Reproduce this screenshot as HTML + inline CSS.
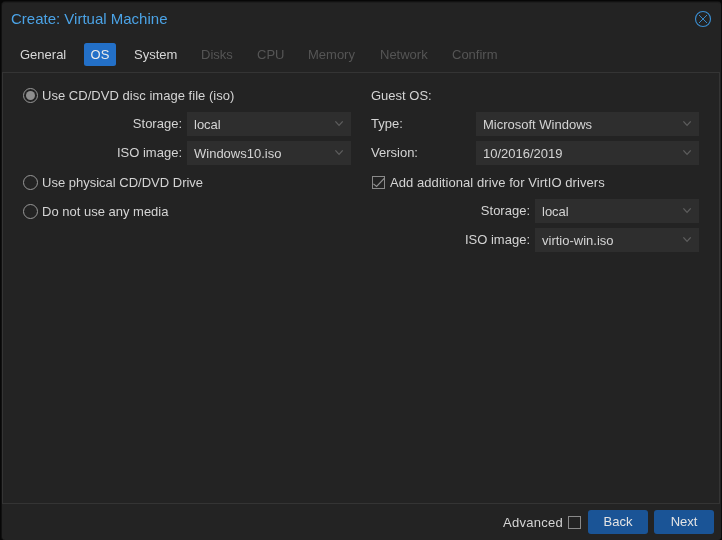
<!DOCTYPE html>
<html>
<head>
<meta charset="utf-8">
<title>Create: Virtual Machine</title>
<style>
html,body{margin:0;padding:0;}
body{width:722px;height:540px;overflow:hidden;background:#070707;font-family:"Liberation Sans",Arial,Helvetica,sans-serif;font-size:13px;color:#d4d4d4;position:relative;}
.win{will-change:transform;position:absolute;left:2px;top:2px;width:719px;height:538px;background:#232323;border-radius:3px;box-shadow:-1px 0 0 #111, 0 -1px 0 #121212, 1px 0 0 #0c0c0c, inset 0 1px 0 #1d1d1d;}
.title{position:absolute;left:9px;top:7px;font-size:15px;line-height:20px;color:#4ba3e6;white-space:nowrap;}
.close{position:absolute;left:692px;top:8px;width:18px;height:18px;}
.tabs{position:absolute;left:0;top:41px;height:24px;}
.tab{position:absolute;top:0;height:23px;line-height:23px;font-size:13px;color:#d8d8d8;white-space:nowrap;}
.tab.dis{color:#555;}
.tab.act{background:#2370c8;border-radius:2.5px;color:#ececec;text-align:center;}
.panel{position:absolute;left:0px;top:70px;width:716px;height:430px;border:1px solid #343434;background:#232323;}
.lbl{position:absolute;height:24px;line-height:24px;white-space:nowrap;color:#d4d4d4;font-size:13px;}
.lbl.r{text-align:right;}
.fld{position:absolute;height:24px;background:#2e2e2e;line-height:24px;font-size:13px;color:#d4d4d4;white-space:nowrap;}
.fld span{position:absolute;left:7px;top:1px;}
.fld svg{position:absolute;right:6px;top:7px;}
.radio{position:absolute;width:13px;height:13px;border:1px solid #979797;border-radius:50%;}
.radio.on::after{content:"";position:absolute;left:2px;top:2px;width:9px;height:9px;border-radius:50%;background:#8e8e8e;}
.chk{position:absolute;width:11px;height:11px;border:1px solid #8a8a8a;}
.btn{position:absolute;top:508px;height:24px;line-height:24px;background:#1a5496;border-radius:3px;color:#e4e4e4;text-align:center;font-size:13px;}
</style>
</head>
<body>
<div class="win">
  <div class="title">Create: Virtual Machine</div>
  <svg class="close" viewBox="0 0 18 18"><circle cx="9" cy="9" r="7.5" fill="none" stroke="#3a8dd0" stroke-width="1.15"/><path d="M5 5 L13 13 M13 5 L5 13" stroke="#3a8dd0" stroke-width="0.95" fill="none"/></svg>

  <div class="tabs">
    <div class="tab" style="left:18px;">General</div>
    <div class="tab act" style="left:82px;width:32px;">OS</div>
    <div class="tab" style="left:132px;">System</div>
    <div class="tab dis" style="left:199px;">Disks</div>
    <div class="tab dis" style="left:255px;">CPU</div>
    <div class="tab dis" style="left:306px;">Memory</div>
    <div class="tab dis" style="left:378px;">Network</div>
    <div class="tab dis" style="left:450px;">Confirm</div>
  </div>

  <div class="panel">
    <!-- left column -->
    <div class="radio on" style="left:20px;top:15px;"></div>
    <div class="lbl" style="left:39px;top:11px;letter-spacing:0.03px;">Use CD/DVD disc image file (iso)</div>

    <div class="lbl r" style="left:60px;width:119px;top:39px;">Storage:</div>
    <div class="fld" style="left:184px;top:39px;width:164px;"><span>local</span><svg width="12" height="10" viewBox="0 0 12 10"><path d="M2.4 2.4 L6.05 6.4 L9.7 2.4" fill="none" stroke="#5e5e5e" stroke-width="1.3"/></svg></div>

    <div class="lbl r" style="left:60px;width:119px;top:68px;">ISO image:</div>
    <div class="fld" style="left:184px;top:68px;width:164px;"><span>Windows10.iso</span><svg width="12" height="10" viewBox="0 0 12 10"><path d="M2.4 2.4 L6.05 6.4 L9.7 2.4" fill="none" stroke="#5e5e5e" stroke-width="1.3"/></svg></div>

    <div class="radio" style="left:20px;top:102px;"></div>
    <div class="lbl" style="left:39px;top:98px;">Use physical CD/DVD Drive</div>

    <div class="radio" style="left:20px;top:131px;"></div>
    <div class="lbl" style="left:39px;top:127px;">Do not use any media</div>

    <!-- right column -->
    <div class="lbl" style="left:368px;top:11px;">Guest OS:</div>

    <div class="lbl" style="left:368px;top:39px;">Type:</div>
    <div class="fld" style="left:473px;top:39px;width:223px;"><span>Microsoft Windows</span><svg width="12" height="10" viewBox="0 0 12 10"><path d="M2.4 2.4 L6.05 6.4 L9.7 2.4" fill="none" stroke="#5e5e5e" stroke-width="1.3"/></svg></div>

    <div class="lbl" style="left:368px;top:68px;">Version:</div>
    <div class="fld" style="left:473px;top:68px;width:223px;"><span>10/2016/2019</span><svg width="12" height="10" viewBox="0 0 12 10"><path d="M2.4 2.4 L6.05 6.4 L9.7 2.4" fill="none" stroke="#5e5e5e" stroke-width="1.3"/></svg></div>

    <div class="chk" style="left:369px;top:103px;"><svg width="13" height="13" viewBox="0 0 13 13" style="position:absolute;left:-1px;top:-1px;"><path d="M1.4 7.9 L4.6 10.4 L12.5 2.1" fill="none" stroke="#929292" stroke-width="1.2"/></svg></div>
    <div class="lbl" style="left:387px;top:98px;letter-spacing:0.065px;">Add additional drive for VirtIO drivers</div>

    <div class="lbl r" style="left:408px;width:119px;top:126px;">Storage:</div>
    <div class="fld" style="left:532px;top:126px;width:164px;"><span>local</span><svg width="12" height="10" viewBox="0 0 12 10"><path d="M2.4 2.4 L6.05 6.4 L9.7 2.4" fill="none" stroke="#5e5e5e" stroke-width="1.3"/></svg></div>

    <div class="lbl r" style="left:408px;width:119px;top:155px;">ISO image:</div>
    <div class="fld" style="left:532px;top:155px;width:164px;"><span>virtio-win.iso</span><svg width="12" height="10" viewBox="0 0 12 10"><path d="M2.4 2.4 L6.05 6.4 L9.7 2.4" fill="none" stroke="#5e5e5e" stroke-width="1.3"/></svg></div>
  </div>

  <!-- bottom toolbar -->
  <div class="lbl" style="left:501px;top:509px;letter-spacing:0.27px;">Advanced</div>
  <div class="chk" style="left:566px;top:514px;"></div>
  <div class="btn" style="left:586px;width:60px;">Back</div>
  <div class="btn" style="left:652px;width:60px;">Next</div>
</div>
</body>
</html>
